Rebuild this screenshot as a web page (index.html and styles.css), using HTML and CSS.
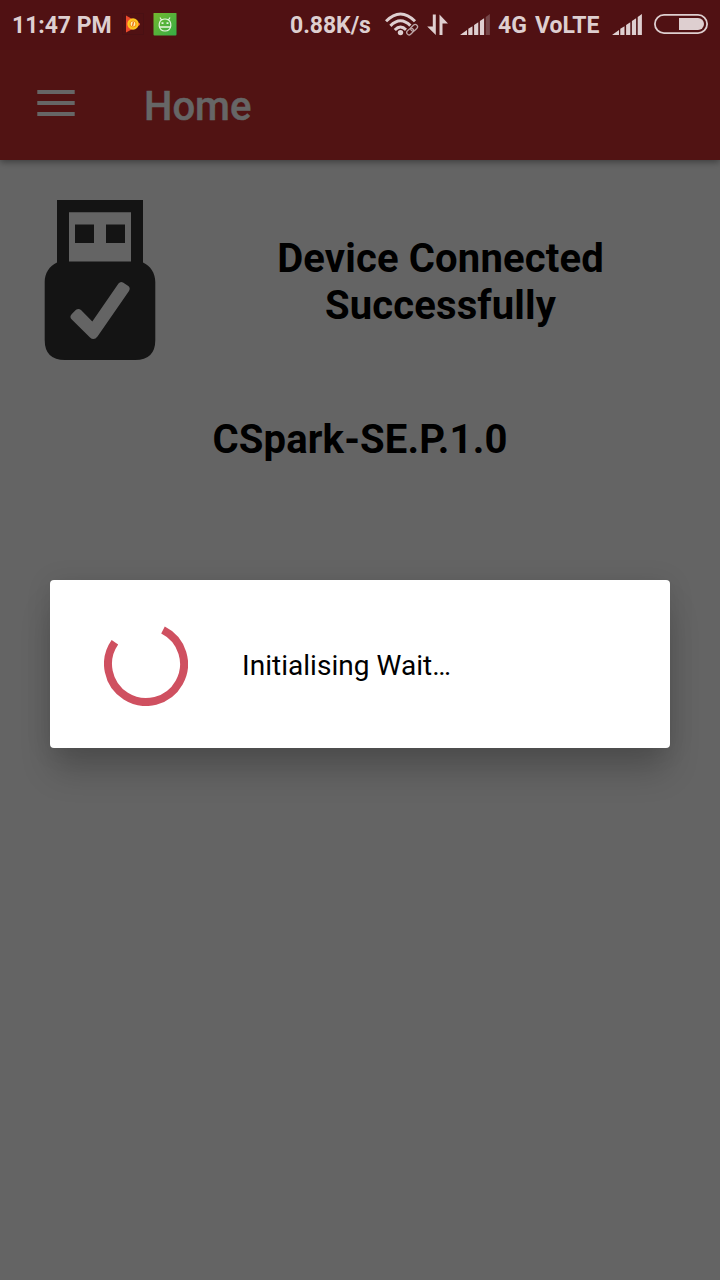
FILE: index.html
```html
<!DOCTYPE html>
<html lang="en">
<head>
<meta charset="utf-8">
<title>Home</title>
<link rel="stylesheet" href="styles.css">
</head>
<body>
<div class="screen">
  <header class="header">
    <div class="status">
      <span class="clock">11:47 PM</span>
      <svg class="play" width="22" height="22" viewBox="0 0 22 22">
        <rect x=".5" y=".5" width="21" height="21" fill="none" stroke="#491013"/>
        <path d="M4 2.500L18 10.500V12L4 19.500Z" fill="#ed4a2c"/>
        <circle cx="11" cy="11" r="5.700" fill="#ffc61e"/>
        <circle cx="11" cy="11" r="3" fill="#fff0b0" stroke="#f59a10" stroke-width="1.200"/>
        <path d="M11.500 9L10.500 13" stroke="#ed6a10" stroke-width="1.300"/>
      </svg>
      <svg class="droid" width="24" height="23" viewBox="0 0 24 23">
        <defs><linearGradient id="leaf" x1="0" y1="0" x2="1" y2="1"><stop offset="0" stop-color="#74b82f"/><stop offset="1" stop-color="#35ad45"/></linearGradient></defs>
        <rect x=".5" y="-.3" width="23" height="22.800" rx="1" fill="url(#leaf)"/>
        <path d="M6 13H18V15H6Z" fill="#c4e3b4"/>
        <path d="M7 4.500L8.500 7Q12 5 15.500 7L17 4.500M8.500 7Q6 8.500 6.200 13Q7 18 12 18Q17 18 17.800 13Q18 8.500 15.500 7" fill="none" stroke="#e5f4df" stroke-width="1.200"/>
        <path d="M8.500 9.300h2v1.700h-2zM13.500 9.300h2v1.700h-2z" fill="#e5f4df"/>
      </svg>
      <span class="speed">0.88K/s</span>
      <svg class="wifi" width="34" height="24" viewBox="0 0 34 24">
        <g fill="none" stroke="#decfd0" stroke-width="3">
          <path d="M1 9.300Q15.500-5.300 30 9.300"/>
          <path d="M5.400 13.900Q15.500 3.700 25.600 13.900"/>
          <path d="M9.800 18Q15.500 12 21.200 18"/>
        </g>
        <circle cx="15.500" cy="20.600" r="2.700" fill="#decfd0"/>
        <g transform="rotate(-43 27 17.500)" fill="none" stroke="#511113" stroke-width="3.500">
          <rect x="20.500" y="15.400" width="7.500" height="4.600" rx="2.300"/><rect x="26" y="15.400" width="7.500" height="4.600" rx="2.300"/>
        </g>
        <g transform="rotate(-43 27 17.500)" fill="none" stroke="#bda7a8" stroke-width="1.300">
          <rect x="20.500" y="15.400" width="7.500" height="4.600" rx="2.300"/><rect x="26" y="15.400" width="7.500" height="4.600" rx="2.300"/>
        </g>
      </svg>
      <svg class="arrows" width="22" height="22" viewBox="0 0 22 22">
        <path d="M5.800 .5H8.800V21L.2 12.500H5.800ZM12.500 .5L21 9.500H15.500V21H12.500Z" fill="#decfd0"/>
      </svg>
      <svg class="signal" width="31" height="22" viewBox="0 0 31 22">
        <path d="M0 21L7 16V21ZM8.300 14.800L12.500 12.200V21H8.300ZM14.100 11L18.300 8.200V21H14.100ZM19.900 7L24.100 4.300V21H19.900Z" fill="#decfd0"/>
        <path d="M25.700 3L29.900 0V21H25.700Z" fill="#754648"/>
      </svg>
      <span class="network">4G</span><span class="volte">VoLTE</span>
      <svg class="signal2" width="31" height="22" viewBox="0 0 31 22">
        <path d="M0 21L7 16V21ZM8.300 14.800L12.500 12.200V21H8.300ZM14.100 11L18.300 8.200V21H14.100ZM19.900 7L24.100 4.300V21H19.900ZM25.700 3L29.900 0V21H25.700Z" fill="#decfd0"/>
      </svg>
      <svg class="battery" width="54" height="20" viewBox="0 0 54 20">
        <rect x=".9" y=".9" width="52.200" height="18.200" rx="9.100" fill="none" stroke="#decfd0" stroke-width="1.800"/>
        <path d="M25 4H44A6 6 0 0 1 44 16H25Z" fill="#decfd0"/>
      </svg>
    </div>
    <div class="toolbar">
      <svg class="menu" width="38" height="26" viewBox="0 0 38 26"><path d="M.3 2H37.700M.3 13H37.700M.3 24H37.700" stroke="#666" stroke-width="4"/></svg>
      <h1 class="title">Home</h1>
    </div>
  </header>
  <main class="content">
    <section class="device">
      <svg class="usb" width="112" height="160" viewBox="0 0 112 160">
        <path fill="#141414" fill-rule="evenodd" d="M13 0H99V62.500C106.500 66 111.300 73 111.300 82V140Q111.300 160 91 160H21Q.7 160 .7 140V82C.7 73 5.500 66 13 62.500ZM25 12.300V61.500H87V12.300Z"/>
        <path fill="#141414" d="M31 24.500h19V43H31zM62 24.500h19V43H62z"/>
        <path transform="translate(.5)" d="M27.300 114L31.500 109.800Q34 108 36.500 110L47.800 121.500L74 83.500Q76 81 78.500 82.500L83.800 86Q86.200 88 84.500 91L53 136.500Q49.500 141 45.500 137.500L27.300 119.500Q24.500 116.800 27.300 114Z" fill="#646464"/>
      </svg>
      <p class="message">Device Connected<br>Successfully</p>
    </section>
    <p class="model">CSpark-SE.P.1.0</p>
  </main>
  <div class="dialog">
    <svg class="spinner" width="84" height="84" viewBox="0 0 84 84"><path d="M59 8A38 38 0 1 1 10.900 20.200" fill="none" stroke="#cf5060" stroke-width="8"/></svg>
    <span class="wait">Initialising Wait…</span>
  </div>
</div>
</body>
</html>
```
FILE: styles.css
```css
* { box-sizing: border-box; }
body { margin: 0; font-family: Roboto, sans-serif; }
p, h1 { margin: 0; }
svg { display: block; flex: none; }
.screen { position: relative; width: 720px; height: 1280px; overflow: hidden; background: #646464; }
.header { height: 160px; background: #511313; box-shadow: 0 2px 7px rgba(0, 0, 0, .4); }
.status { display: flex; height: 50px; background: #501113; color: #decfd0; font-size: 23px; line-height: 52px; font-weight: 700; letter-spacing: -.05px; white-space: nowrap; }
.clock { width: 110px; padding-left: 12px; }
.play { margin: 13px 0 0 12px; }
.droid { margin: 13px 0 0 9px; }
.speed { width: 95px; margin-left: 113px; }
.wifi { margin: 12px 0 0; }
.arrows { margin: 14px 0 0 8px; }
.signal { margin: 14px 0 0 11px; }
.network { width: 37px; margin-left: 7px; }
.volte { width: 77px; }
.signal2 { margin: 14px 0 0; }
.battery { margin: 14px 0 0 11px; }
.toolbar { display: flex; height: 110px; align-items: flex-start; }
.menu { margin: 40px 0 0 37px; }
.title { margin: 33px 0 0 69px; color: #666; font-size: 40px; line-height: 48px; font-weight: 500; -webkit-text-stroke: .5px #666; }
.content { padding-top: 40px; color: #000; font-size: 40px; line-height: 47px; font-weight: 700; letter-spacing: .15px; text-align: center; }
.device { display: flex; height: 160px; align-items: center; padding-left: 44px; }
.message { width: 480px; margin: 4px 0 0 44.5px; }
.model { margin-top: 56px; }
.dialog { position: absolute; left: 50px; top: 580px; display: flex; align-items: center; width: 620px; height: 168px; padding-left: 54px; border-radius: 4px; background: #fff; box-shadow: 0 26px 32px -4px rgba(0, 0, 0, .2), 0 2px 26px rgba(0, 0, 0, .1); }
.wait { margin: 3px 0 0 54px; color: #000; font-size: 28px; line-height: 34px; letter-spacing: .03px; white-space: nowrap; }
```
